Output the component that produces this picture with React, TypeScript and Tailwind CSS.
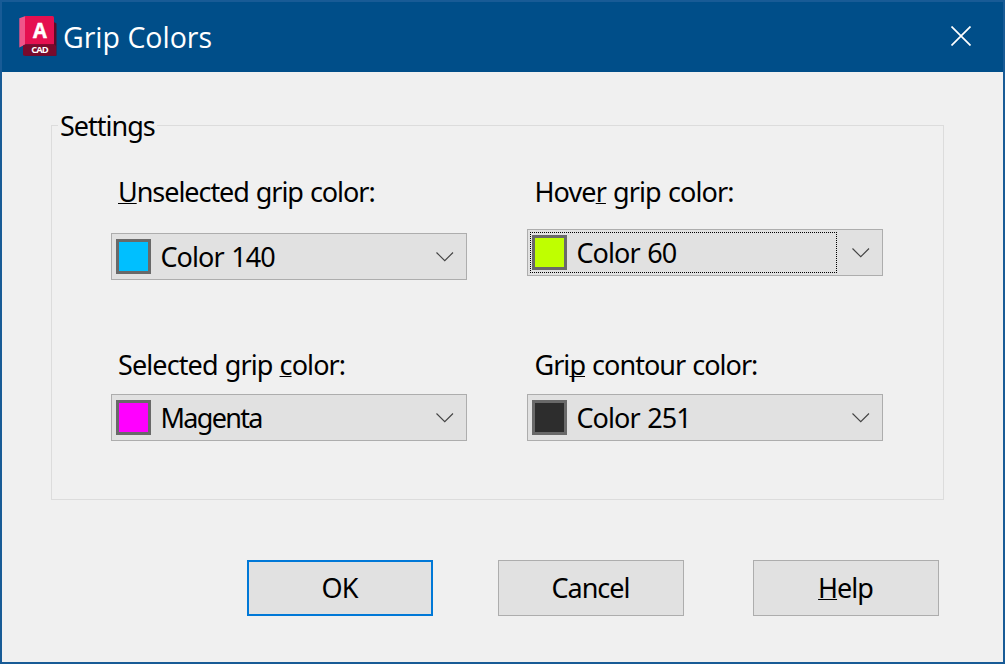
import type { ReactNode } from "react";

function Key({ children }: { children: ReactNode }) {
  return (
    <span className="underline decoration-1 underline-offset-[1px] [text-decoration-skip-ink:none]">
      {children}
    </span>
  );
}

function AppLogo() {
  return (
    <svg width="38" height="42" viewBox="0 0 38 42" className="mb-[2px] block shrink-0">
      <path d="M34 6.500 37.500 8.500V40.800H6.500L4.500 39V31L34 28Z" fill="#5d0b25" />
      <path d="M0.300 3.200 6.500 1V29.500L0.300 32.500Z" fill="#f0558a" />
      <path d="M6 1H33.500Q35 1 35 2.500V29.500H6Z" fill="#e51050" />
      <path d="M4 30.500 6.500 29.200H35L37 31V40.800H5.500Q4 40.800 4 39.300Z" fill="#780a2c" />
      <text x="20.500" y="22.900" textAnchor="middle" fontFamily="Open Sans" fontWeight="700" fontSize="21.500" fill="#fff" stroke="#fff" strokeWidth="0.500" textLength="13" lengthAdjust="spacingAndGlyphs">A</text>
      <text x="20.500" y="37.500" textAnchor="middle" fontFamily="Open Sans" fontWeight="700" fontSize="8.500" fill="#fff" textLength="16.500" lengthAdjust="spacingAndGlyphs">CAD</text>
    </svg>
  );
}

function Chevron() {
  return (
    <svg width="18" height="10" viewBox="0 0 18 10" className="block shrink-0" fill="none" stroke="#444" strokeWidth="1.150">
      <path d="M0.500 0.500 8.750 8.750 17 0.500" />
    </svg>
  );
}

function Combo({ swatch, focused, children }: { swatch: string; focused?: boolean; children: ReactNode }) {
  return (
    <button className="relative flex h-[47px] w-[356px] items-center border border-[#adadad] bg-[#e1e1e1] pr-[12px] pl-[4px] text-left tracking-[-0.950px] [word-spacing:1.500px]">
      <span className={`block size-[35px] shrink-0 border-[3px] border-[#696969] ${swatch}`} />
      <span className="ml-[9.500px] flex-1 leading-[34px]">{children}</span>
      <Chevron />
      {focused && <span className="absolute top-[2px] left-[2px] h-[41px] w-[307px] border border-dotted border-black" />}
    </button>
  );
}

function DialogButton({ primary, children }: { primary?: boolean; children: ReactNode }) {
  return (
    <button
      className={`flex h-[56px] w-[186px] items-center justify-center bg-[#e1e1e1] pr-[1px] ${primary ? "border-2 border-[#0078d7] tracking-[-1px]" : "border border-[#adadad] tracking-[-1px]"}`}
    >
      {children}
    </button>
  );
}

export default function App() {
  return (
    <div className="flex h-[664px] w-[1005px] flex-col border-2 border-[#185b96] bg-[#f0f0f0] font-['Noto_Sans','Liberation_Sans',sans-serif] text-[27px] leading-[36px] tracking-[-0.900px] text-black [word-spacing:1px]">
      <header className="flex h-[70px] shrink-0 items-center bg-[#004e89] pl-[17px] pr-[32px] text-white">
        <AppLogo />
        <h1 className="ml-[6px] flex-1 font-['Open_Sans','Noto_Sans',sans-serif] text-[28.500px] font-normal tracking-normal [word-spacing:0px]">
          Grip Colors
        </h1>
        <svg width="20" height="20" viewBox="0 0 20 20" className="mb-[2px] block" fill="none" stroke="#fff" strokeWidth="1.700">
          <path d="M0.500 0.500 19.500 19.500M19.500 0.500 0.500 19.500" />
        </svg>
      </header>

      <main className="flex flex-1 flex-col px-[49px] pt-[53px]">
        <section className="h-[375px] w-[893px] border border-[#dcdcdc]">
          <h2 className="-mt-[18px] ml-[6px] h-[36px] w-fit bg-[#f0f0f0] pr-[2px] pl-[2px] tracking-[-1px]">Settings</h2>
          <div className="flex gap-[60px] pl-[59px]">
            <div className="w-[356px]">
              <div className="h-[89px] pt-[30px] pl-[7px] tracking-[-1.050px]"><Key>U</Key>nselected grip color:</div>
              <Combo swatch="bg-[#00bfff]">Color 140</Combo>
              <div className="h-[114px] pt-[67px] pl-[7px]">Selected grip <Key>c</Key>olor:</div>
              <Combo swatch="bg-[#ff00ff]"><span className="tracking-[-1.700px]">Magenta</span></Combo>
            </div>
            <div className="w-[356px]">
              <div className="h-[85px] pt-[30px] pl-[7.500px]">Hove<Key>r</Key> grip color:</div>
              <Combo swatch="bg-[#bfff00]" focused>Color 60</Combo>
              <div className="h-[118px] pt-[71px] pl-[7.500px] tracking-[-0.970px]">Gri<Key>p</Key> contour color:</div>
              <Combo swatch="bg-[#2d2d2d]">Color 251</Combo>
            </div>
          </div>
        </section>
        <footer className="mt-[60px] flex pl-[196px]">
          <DialogButton primary>OK</DialogButton>
          <div className="ml-[65px]"><DialogButton>Cancel</DialogButton></div>
          <div className="ml-[69px]"><DialogButton><span><Key>H</Key>elp</span></DialogButton></div>
        </footer>
      </main>
    </div>
  );
}
